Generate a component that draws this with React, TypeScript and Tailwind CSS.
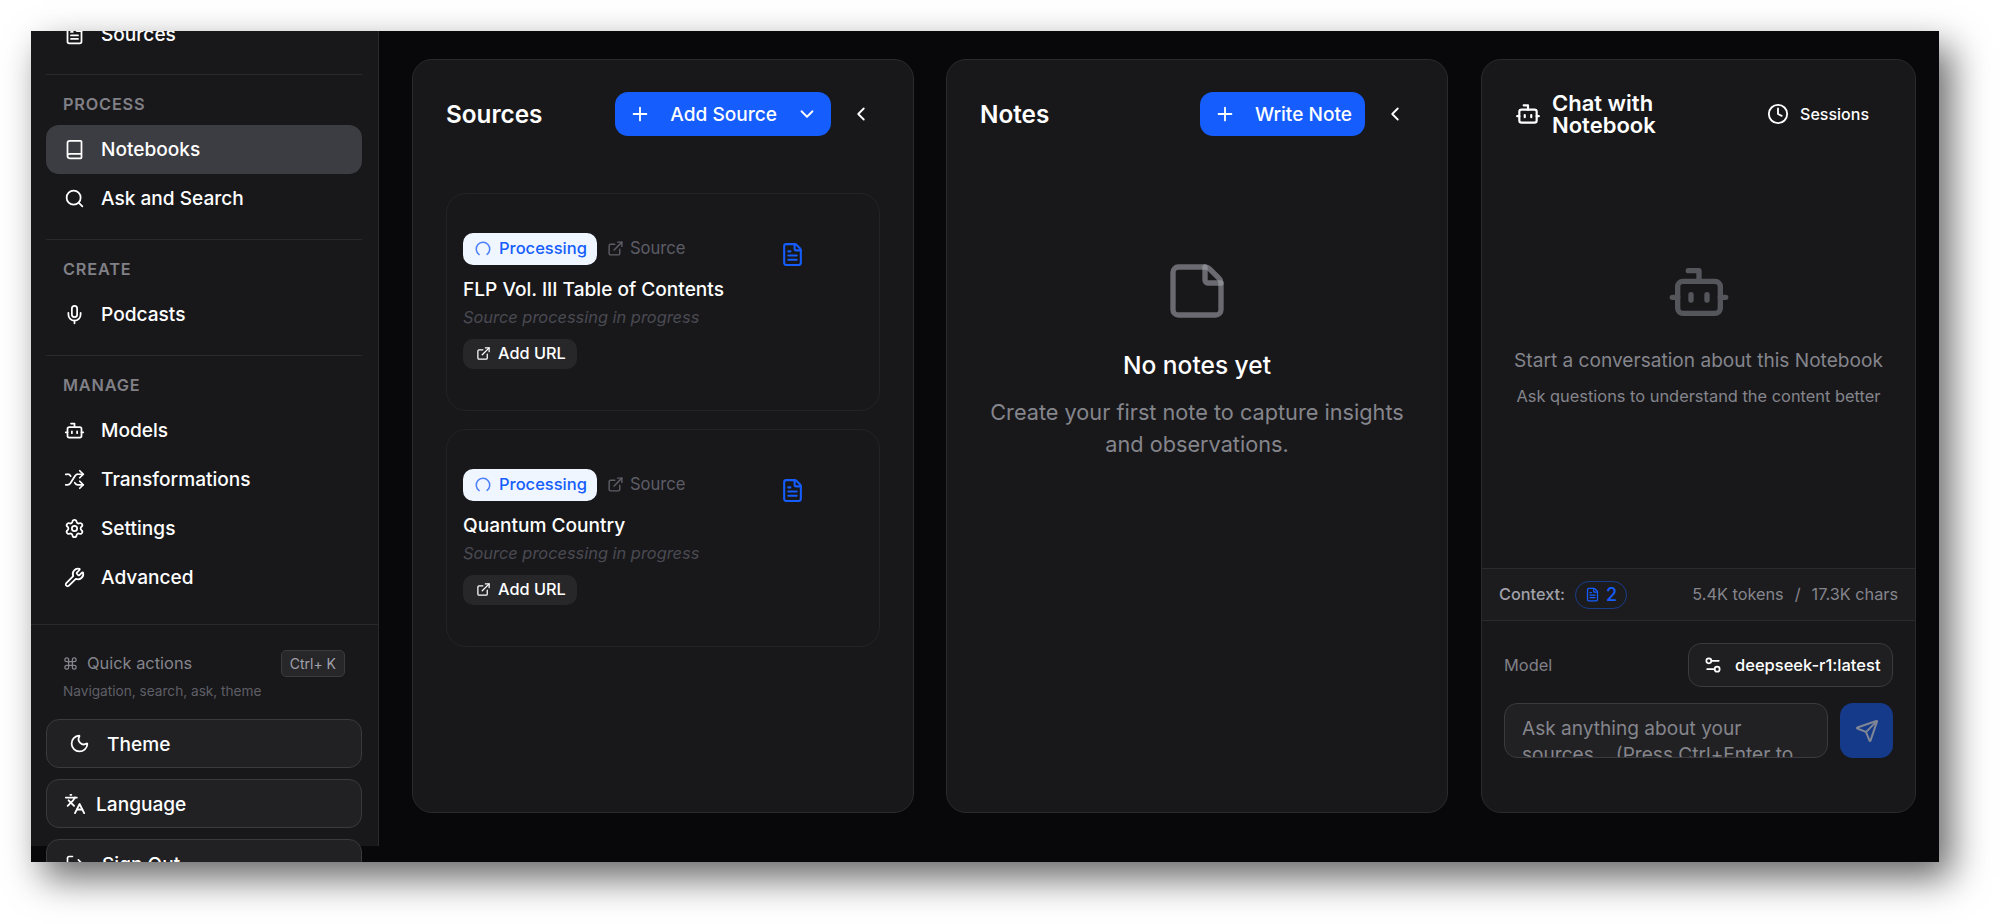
import React from 'react';
import {
  Book, Bot, ChevronDown, ChevronLeft, Clock, ExternalLink, FileText, Languages, LoaderCircle, LogOut, Mic, Moon,
  Plus, Search, Send, Settings, Settings2, Shuffle, StickyNote, Wrench, Command,
} from 'lucide-react';

const NavRow: React.FC<{ icon: React.ElementType; label: string; active?: boolean }> = ({ icon: Icon, label, active }) => (
  <div className={`flex h-[49px] items-center gap-4 rounded-[13px] pl-[18px] text-[19.1px] font-medium text-white ${active ? 'bg-[#3c3c43]' : ''}`}>
    <Icon size={21} strokeWidth={2} />
    <span>{label}</span>
  </div>
);

const Section: React.FC<{ title: string; children: React.ReactNode }> = ({ title, children }) => (
  <div className="border-t border-[#2a2a2e] pb-4">
    <div className="mt-[18.5px] mb-[11.5px] pl-[17px] text-[16.3px] leading-5 font-semibold tracking-[0.05em] text-[#808086]">{title}</div>
    {children}
  </div>
);

const FooterButton: React.FC<{ icon: React.ElementType; label: string; pad: string; gap: string; size: number }> = ({ icon: Icon, label, pad, gap, size }) => (
  <div className={`flex h-[49px] shrink-0 items-center rounded-[13px] border border-[#3a3a3f] bg-[#212124] text-[19.1px] font-medium text-white ${pad} ${gap}`}>
    <Icon size={size} />
    <span>{label}</span>
  </div>
);

const Sidebar: React.FC = () => (
  <aside className="h-[815px] w-[348px] shrink-0 border-r border-[#2a2a2e] bg-[#18181b]">
    <div className="-mt-[21px] px-[15px] pr-4">
      <div className="mb-[15px]">
        <NavRow icon={FileText} label="Sources" />
      </div>
      <Section title="PROCESS">
        <NavRow icon={Book} label="Notebooks" active />
        <NavRow icon={Search} label="Ask and Search" />
      </Section>
      <Section title="CREATE">
        <NavRow icon={Mic} label="Podcasts" />
      </Section>
      <Section title="MANAGE">
        <NavRow icon={Bot} label="Models" />
        <NavRow icon={Shuffle} label="Transformations" />
        <NavRow icon={Settings} label="Settings" />
        <NavRow icon={Wrench} label="Advanced" />
      </Section>
    </div>
    <div className="mt-[6px] border-t border-[#2a2a2e] px-[15px] pt-[25px] pr-4">
      <div className="flex items-center justify-between pr-[17px] pl-[17px]">
        <div className="flex items-center gap-[9px] text-[16.4px] text-[#85858c]">
          <Command size={15} />
          <span>Quick actions</span>
        </div>
        <span className="rounded-[5px] border border-[#3a3a3f] bg-[#27272a] px-2 py-[2px] text-[14px] text-[#a1a1aa]">Ctrl+ K</span>
      </div>
      <div className="mt-[4px] pl-[17px] text-[13.65px] text-[#5f5f66]">Navigation, search, ask, theme</div>
      <div className="mt-[18px] flex flex-col gap-[11px]">
        <FooterButton icon={Moon} label="Theme" pad="pl-[22px]" gap="gap-[17px]" size={21} />
        <FooterButton icon={Languages} label="Language" pad="pl-[17px]" gap="gap-[10px]" size={22} />
        <FooterButton icon={LogOut} label="Sign Out" pad="pl-[18px]" gap="gap-[17px]" size={20} />
      </div>
    </div>
  </aside>
);

const PanelHeader: React.FC<{ title: string; action: string; caret?: boolean }> = ({ title, action, caret }) => (
  <div className="flex items-center justify-between pt-8 pr-8 pl-[33px]">
    <h2 className="text-[24.3px] font-semibold text-white">{title}</h2>
    <div className="flex items-center gap-[10px]">
      <div className="flex h-11 items-center gap-[19px] rounded-[13px] bg-[#155dfc] pr-[13px] pl-[14px] text-[19.1px] font-medium text-white">
        <Plus size={22} />
        <span>{action}</span>
        {caret && <ChevronDown size={22} />}
      </div>
      <div className="flex h-10 w-10 items-center justify-center text-white">
        <ChevronLeft size={22} />
      </div>
    </div>
  </div>
);

const SourceCard: React.FC<{ title: string }> = ({ title }) => (
  <div className="flex h-[218px] rounded-[20px] border border-[#232327] pt-[38.5px] pl-4">
    <div className="w-[317px]">
      <div className="flex items-center gap-[10px]">
        <span className="flex h-8 items-center gap-[7px] rounded-[10px] bg-[#eff6ff] pr-[10px] pl-[11px] text-[16.5px] font-medium text-[#155dfc]">
          <LoaderCircle size={18} className="rotate-[125deg] text-[#4b7ffb]" />
          Processing
        </span>
        <span className="flex items-center gap-[6px] text-[16.6px] text-[#5d5d66]">
          <ExternalLink size={17} />
          Source
        </span>
      </div>
      <div className="mt-[10px] text-[19.1px] leading-7 font-medium text-white">{title}</div>
      <div className="text-[16.4px] leading-7 text-[#4a4a52] italic">Source processing in progress</div>
      <div className="mt-2 flex h-[30px] w-[114px] items-center gap-[7px] rounded-[10px] bg-[#27272a] pl-[13px] text-[16.3px] font-medium text-white">
        <ExternalLink size={15} />
        Add URL
      </div>
    </div>
    <FileText size={25} className="mt-[9px] text-[#155dfc]" />
  </div>
);

const SourcesPanel: React.FC = () => (
  <section className="h-[754px] w-[502px] shrink-0 rounded-[20px] border border-[#2b2b2f] bg-[#18181b]">
    <PanelHeader title="Sources" action="Add Source" caret />
    <div className="mt-[57px] flex flex-col gap-[18px] pr-[33px] pl-[33px]">
      <SourceCard title="FLP Vol. III Table of Contents" />
      <SourceCard title="Quantum Country" />
    </div>
  </section>
);

const NotesPanel: React.FC = () => (
  <section className="h-[754px] w-[502px] shrink-0 rounded-[20px] border border-[#2b2b2f] bg-[#18181b]">
    <PanelHeader title="Notes" action="Write Note" />
    <div className="mt-[123px] flex flex-col items-center text-center">
      <StickyNote size={64} strokeOpacity={0.6} className="text-[#a1a1aa]" />
      <div className="mt-[26px] text-[24.5px] leading-8 font-medium text-white">No notes yet</div>
      <p className="mt-[15px] w-[440px] text-[21.7px] leading-8 text-[#85858c]">Create your first note to capture insights and observations.</p>
    </div>
  </section>
);

const ChatPanel: React.FC = () => (
  <section className="ml-px flex h-[754px] w-[435px] shrink-0 flex-col rounded-[20px] border border-[#2b2b2f] bg-[#18181b]">
    <div className="flex items-center justify-between pt-[32px] pr-[46px] pl-[33px]">
      <div className="flex items-center gap-[11px] text-white">
        <Bot size={26} />
        <h2 className="w-[130px] text-[22px] leading-[22px] font-semibold">Chat with Notebook</h2>
      </div>
      <div className="flex items-center gap-[11px] text-[16px] font-medium text-white">
        <Clock size={22} />
        <span>Sessions</span>
      </div>
    </div>
    <div className="flex flex-1 flex-col items-center pt-[124px] text-center">
      <Bot size={64} className="text-[#55555c]" />
      <div className="mt-[20px] text-[19.1px] leading-8 text-[#85858c]">Start a conversation about this Notebook</div>
      <div className="mt-1 text-[16.4px] leading-8 text-[#85858c]">Ask questions to understand the content better</div>
    </div>
    <div className="flex h-[53px] items-center justify-between border-y border-[#2b2b2f] bg-[#1c1c1f] pr-[17px] pl-[17px] text-[16.3px]">
      <div className="flex items-center gap-[10px]">
        <span className="font-medium text-[#a1a1aa]">Context:</span>
        <span className="flex h-7 w-[52px] items-center justify-center gap-[6px] rounded-full border border-[#193c8a] text-[18px] font-medium text-[#155dfc]">
          <FileText size={15} />
          2
        </span>
      </div>
      <div className="flex gap-[11px] text-[#85858c]">
        <span>5.4K tokens</span>
        <span>/</span>
        <span>17.3K chars</span>
      </div>
    </div>
    <div className="pt-[22px] pr-[22px] pb-[54px] pl-[22px]">
      <div className="flex items-center justify-between">
        <span className="text-[16.4px] text-[#808086]">Model</span>
        <div className="flex h-[44px] w-[205px] items-center gap-[12px] rounded-[13px] border border-[#3a3a3f] bg-[#1f1f22] pl-[14px] text-[16.5px] font-medium whitespace-nowrap text-white">
          <Settings2 size={20} />
          <span>deepseek-r1:latest</span>
        </div>
      </div>
      <div className="mt-[16px] flex gap-3">
        <textarea
          readOnly
          rows={2}
          className="h-[55px] w-[325px] resize-none overflow-hidden rounded-[13px] border border-[#3a3a3f] bg-[#212124] px-[17px] py-[11px] text-[19.1px] leading-[26px] outline-none placeholder:text-[#85858c]"
          placeholder="Ask anything about your sources... (Press Ctrl+Enter to send)"
        />
        <div className="flex h-[55px] w-[53px] items-center justify-center rounded-[13px] bg-[#163a8a] text-[#7f8696]">
          <Send size={24} />
        </div>
      </div>
    </div>
  </section>
);

export default function App() {
  return (
    <div className="h-[924px] w-[2001px] overflow-hidden bg-white pt-[31px] pl-[31px] font-['Inter',sans-serif]">
      <div className="flex h-[831px] w-[1908px] overflow-hidden bg-[#08080a] shadow-[12px_16px_35px_rgba(0,0,0,0.6)]">
        <Sidebar />
        <main className="flex gap-8 pt-[28px] pl-[33px]">
          <SourcesPanel />
          <NotesPanel />
          <ChatPanel />
        </main>
      </div>
    </div>
  );
}
